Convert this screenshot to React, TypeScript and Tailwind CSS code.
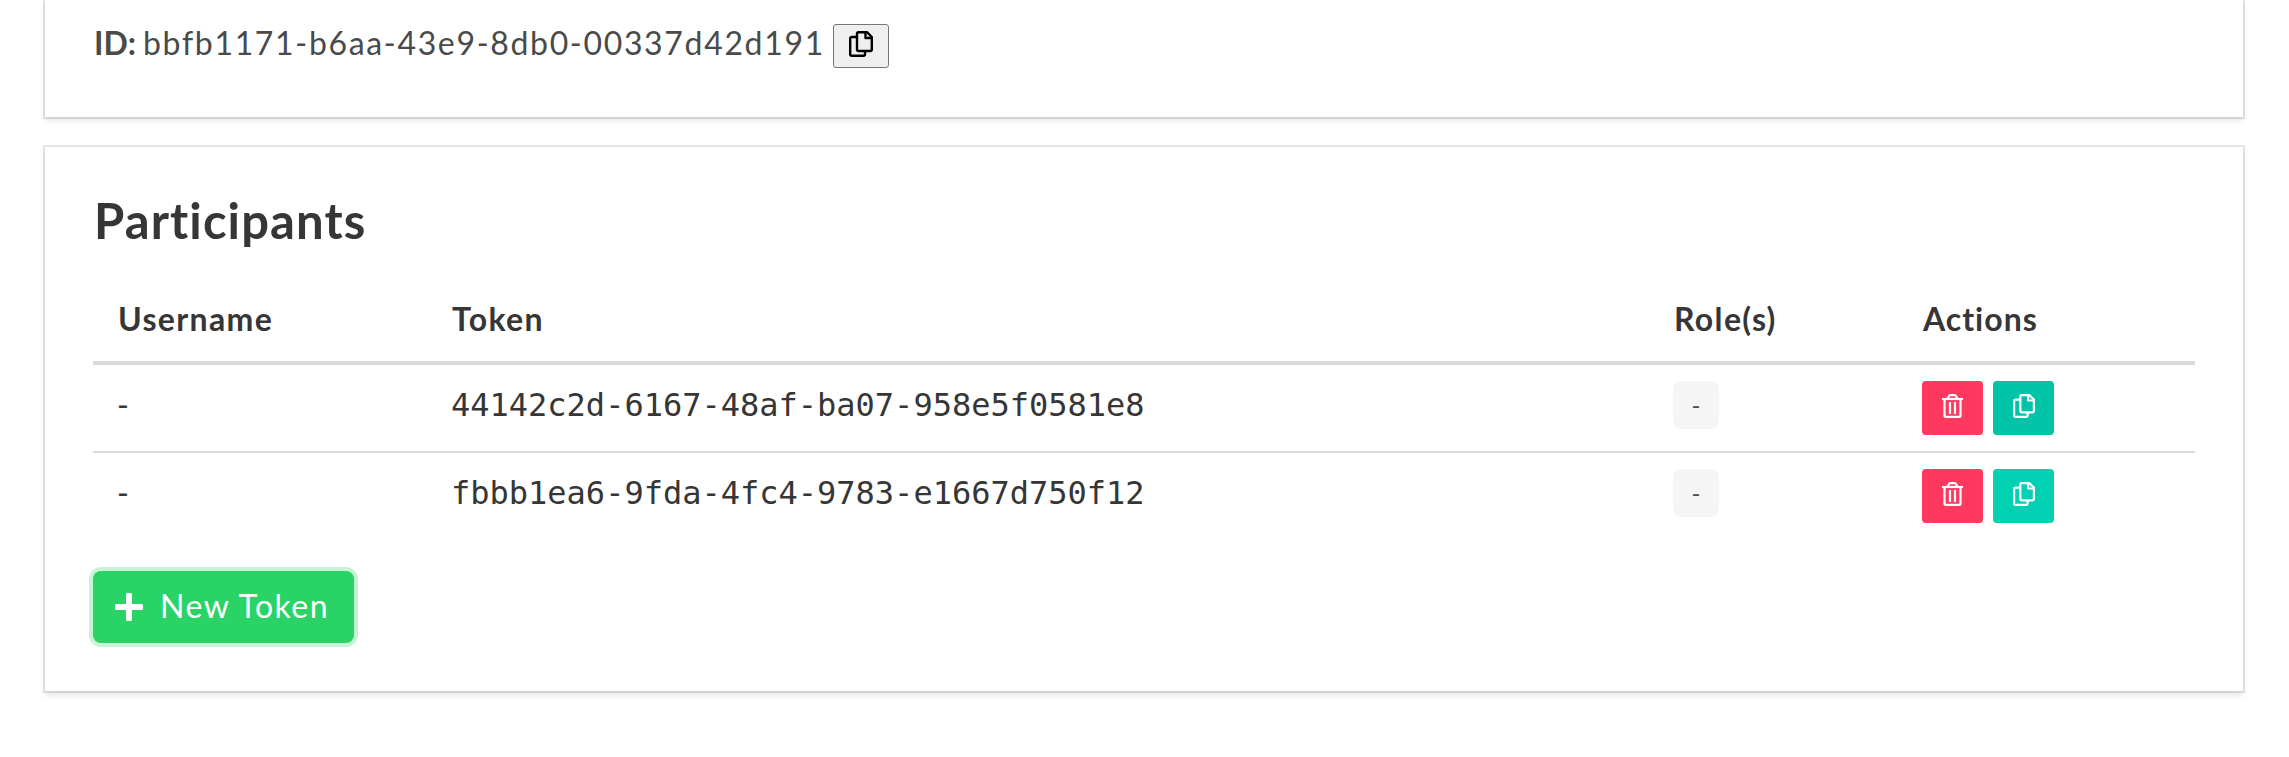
import React from "react";

const sans = "font-['Lato','Liberation_Sans',sans-serif]";

function CopyIcon({ className }: { className: string }) {
  return (
    <svg viewBox="0 0 24 26" className={className} fill="none" stroke="currentColor" strokeWidth="2.4" strokeLinejoin="round">
      <path d="M8 6H3Q1.200 6 1.200 7.500V23.300Q1.200 24.800 3 24.800H14.500Q16 24.800 16 23.300V20" />
      <path d="M9.500 1.200H18L22.800 6V18.500Q22.800 20 21.300 20H9.500Q8 20 8 18.500V2.700Q8 1.200 9.500 1.200Z" />
      <path d="M16.500 1.500V7H22.500" />
    </svg>
  );
}

function TrashIcon({ className }: { className: string }) {
  return (
    <svg viewBox="0 0 21 24" className={className} fill="none" stroke="currentColor" strokeWidth="2.2" strokeLinejoin="round">
      <path d="M0 5H21" />
      <path d="M5.500 5L7 2Q7.500 1.100 8.500 1.100H12.500Q13.500 1.100 14 2L15.500 5" />
      <path d="M2.500 5V21.500Q2.500 22.900 4 22.900H17Q18.500 22.900 18.500 21.500V5" />
      <path d="M8 8V20M13 8V20" />
    </svg>
  );
}

function PlusIcon() {
  return (
    <svg viewBox="0 0 28 28" className="h-7 w-7 shrink-0" fill="currentColor">
      <rect x="11" y="0" width="6" height="28" rx="1.500" />
      <rect x="0" y="11" width="28" height="6" rx="1.500" />
    </svg>
  );
}

const box = "bg-white px-12 shadow-[0_4px_6px_rgba(10,10,10,0.1),0_0_0_2px_rgba(10,10,10,0.1)]";

const columns = "grid grid-cols-[334px_1222px_249px_297px]";

const tokens = [
  { id: "44142c2d-6167-48af-ba07-958e5f0581e8", copy: "bg-[#00c4a7]" },
  { id: "fbbb1ea6-9fda-4fc4-9783-e1667d750f12", copy: "bg-[#00d1b2]" },
];

export default function App() {
  return (
    <div className={`h-[757px] w-[2289px] overflow-hidden bg-white pl-[45px] text-[32px] leading-[48px] text-[#4a4a4a] ${sans}`}>
      <section className={`${box} h-[117px] w-[2198px] pt-[19px]`}>
        <div className="flex items-start">
          <strong className="w-[50px] pl-px font-bold">ID:</strong>
          <span className="w-[690px] whitespace-nowrap tracking-[1.670px]">bbfb1171-b6aa-43e9-8db0-00337d42d191</span>
          <button className="mt-[5px] flex h-11 w-14 justify-center rounded-[3px] border border-[#767676] bg-[#efefef] pt-1.5 text-black">
            <CopyIcon className="h-[26px] w-6" />
          </button>
        </div>
      </section>

      <section className={`${box} mt-[30px] h-[544px] w-[2198px] pt-[46px]`}>
        <h2 className="h-[88px] pl-px text-[49px] leading-[54px] font-bold tracking-[1.100px] text-[#363636]">
          Participants
        </h2>
        <div className="text-[#363636]">
          <div className={`${columns} h-21 border-b-4 border-[#dbdbdb] pt-[14px] font-bold tracking-[1.350px]`}>
            <div className="pl-[25px]">Username</div>
            <div className="pl-[25px]">Token</div>
            <div className="pl-[25px]">Role(s)</div>
            <div className="pl-[25px] tracking-[1px]">Actions</div>
          </div>
          {tokens.map((token, i) => (
            <div key={token.id} className={`${columns} pt-4 ${i === 0 ? "h-[88px] border-b-2 border-[#dbdbdb]" : "h-[86px]"}`}>
              <div className="pl-6">-</div>
              <div className="pl-6 font-['DejaVu_Sans_Mono',monospace]">{token.id}</div>
              <div className="pl-6">
                <span className="flex h-12 w-[46px] items-center justify-center rounded-lg bg-[#f5f5f5] text-[24px] text-[#4a4a4a]">-</span>
              </div>
              <div className="flex gap-2.5 pl-6 text-white">
                <button className="flex h-[54px] w-[61px] justify-center rounded-[4px] bg-[#ff3860] pt-[13px]">
                  <TrashIcon className="h-6 w-[21px]" />
                </button>
                <button className={`flex h-[54px] w-[61px] justify-center rounded-[4px] pt-[13px] ${token.copy}`}>
                  <CopyIcon className="h-6 w-[22px]" />
                </button>
              </div>
            </div>
          ))}
        </div>
        <button className="mt-8 flex h-18 w-[261px] items-center rounded-lg bg-[#29d366] pl-[22px] text-white shadow-[0_0_0_4px_rgba(35,209,96,0.25)]">
          <PlusIcon />
          <span className="-mt-0.5 ml-[17px] whitespace-nowrap tracking-[1.500px]">New Token</span>
        </button>
      </section>
    </div>
  );
}
